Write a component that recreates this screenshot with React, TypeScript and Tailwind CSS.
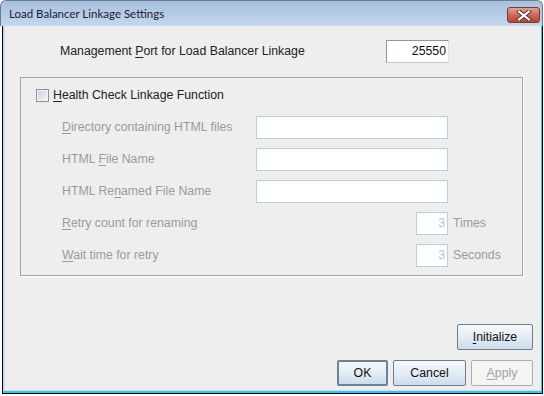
import React from "react";

const F = { fontFamily: '"Liberation Sans", Arial, sans-serif' };

function U({ children }: { children: React.ReactNode }) {
  return <span className="underline underline-offset-[2px] decoration-1">{children}</span>;
}

function DisabledField({ w }: { w: string }) {
  return <div className={`${w} h-[23px] bg-white border border-[#b8cfe7]`} />;
}

function Row({ label, children }: { label: React.ReactNode; children: React.ReactNode }) {
  return (
    <div className="flex items-center h-[23px]">
      <div className="w-[194px] text-[12.3px] text-[#9b9b9b]">{label}</div>
      {children}
    </div>
  );
}

function SmallRow({ label, value, unit }: { label: React.ReactNode; value: string; unit: string }) {
  return (
    <div className="flex items-center h-[23px]">
      <div className="w-[354px] text-[12.3px] text-[#9b9b9b]">{label}</div>
      <div className="w-[32px] h-[23px] bg-white border border-[#b8cfe7] flex items-center justify-end pr-[2px] text-[12.3px] text-[#a9c4e2]">
        {value}
      </div>
      <div className="ml-[5px] text-[12.3px] text-[#9b9b9b]">{unit}</div>
    </div>
  );
}

function Btn({
  children,
  w,
  def,
  disabled,
}: {
  children: React.ReactNode;
  w: string;
  def?: boolean;
  disabled?: boolean;
}) {
  const base = `${w} h-[26px] flex items-center justify-center text-[12.3px] rounded-[2px]`;
  if (disabled)
    return <div className={`${base} border border-[#adadad] bg-[#f4f4f4] text-[#a3a3a3]`}>{children}</div>;
  return (
    <div
      className={`${base} ${
        def ? "border-2 border-[#6e8296]" : "border border-[#707c89]"
      } bg-gradient-to-b from-[#f6f8fb] via-[#e4ecf5] to-[#cddcec] text-[#111]`}
    >
      {children}
    </div>
  );
}

export default function App() {
  return (
    <div className="w-[544px] h-[396px] bg-white flex flex-col" style={F}>
      {/* Title bar */}
      <div className="h-[26px] w-[543px] flex items-start rounded-tl-[6px] rounded-tr-[6px] border-t border-l border-r border-[#6d7b8a] bg-gradient-to-b from-[#a6c0dd] to-[#c4d8ee]">
        <div
          className="pl-[8px] pt-[6px] text-[11.5px] text-[#1b1a33] leading-[14px]"
          style={{ fontFamily: 'Lato, "Noto Sans", sans-serif' }}
        >
          Load Balancer Linkage Settings
        </div>
        <div className="ml-auto mr-[2px] mt-[6px] w-[33px] h-[16px] rounded-[3px] border border-[#7b3b33] bg-gradient-to-b from-[#e0a397] via-[#c96a5b] to-[#b84433] flex items-center justify-center">
          <svg width="16" height="11" viewBox="0 0 16 11">
            <path d="M3 1.5 L13 9.5 M13 1.5 L3 9.5" stroke="#4a2a28" strokeWidth="4" strokeLinecap="square" />
            <path d="M3 1.5 L13 9.5 M13 1.5 L3 9.5" stroke="#ffffff" strokeWidth="2.2" strokeLinecap="square" />
          </svg>
        </div>
      </div>

      {/* Body frame */}
      <div className="ml-[2px] w-[541px] h-[368px] border-l border-r border-b border-black bg-[#3cc2ee] pr-[1px] pb-[2px] flex">
        <div className="flex-1 bg-[#eeeeee] border-l-2 border-b border-[#c6dcf2] flex flex-col pr-[8px] pb-[4px]">
          {/* Port row */}
          <div className="mt-[14px] flex items-center h-[23px]">
            <div className="pl-[55px] w-[381px] text-[12.3px] text-[#222]">
              Management <U>P</U>ort for Load Balancer Linkage
            </div>
            <div className="w-[63px] h-[23px] bg-white border border-[#8a96a3] border-r-[#dfe5ec] border-b-[#c0c9d2] flex items-center justify-end pr-[2px] text-[12.3px] text-[#111]">
              25550
            </div>
          </div>

          {/* Group box */}
          <div className="mt-[14px] ml-[15px] w-[503px] h-[199px] border border-[#a5a69d] shadow-[1px_1px_0_#ffffff] flex flex-col pt-[6px]">
            <div className="flex items-center h-[23px] pl-[15px]">
              <div className="w-[13px] h-[13px] border border-[#8e9296] bg-gradient-to-br from-[#c9d3de] to-[#f6f7f9] shadow-[inset_0_0_0_1px_#f2f4f7]" />
              <div className="ml-[4px] text-[12.3px] text-[#222]">
                <U>H</U>ealth Check Linkage Function
              </div>
            </div>
            <div className="flex flex-col gap-[9px] mt-[9px] pl-[41px]">
              <Row
                label={
                  <>
                    <U>D</U>irectory containing HTML files
                  </>
                }
              >
                <DisabledField w="w-[192px]" />
              </Row>
              <Row
                label={
                  <>
                    HTML <U>F</U>ile Name
                  </>
                }
              >
                <DisabledField w="w-[192px]" />
              </Row>
              <Row
                label={
                  <>
                    HTML Re<U>n</U>amed File Name
                  </>
                }
              >
                <DisabledField w="w-[192px]" />
              </Row>
              <SmallRow
                label={
                  <>
                    <U>R</U>etry count for renaming
                  </>
                }
                value="3"
                unit="Times"
              />
              <SmallRow
                label={
                  <>
                    <U>W</U>ait time for retry
                  </>
                }
                value="3"
                unit="Seconds"
              />
            </div>
          </div>

          <div className="flex-1" />
          <div className="flex justify-end">
            <Btn w="w-[76px]">
              <U>I</U>nitialize
            </Btn>
          </div>
          <div className="mt-[10px] flex justify-end gap-[5px]">
            <Btn w="w-[51px]" def>
              OK
            </Btn>
            <Btn w="w-[73px]">Cancel</Btn>
            <Btn w="w-[62px]" disabled>
              <U>A</U>pply
            </Btn>
          </div>
        </div>
      </div>
    </div>
  );
}
